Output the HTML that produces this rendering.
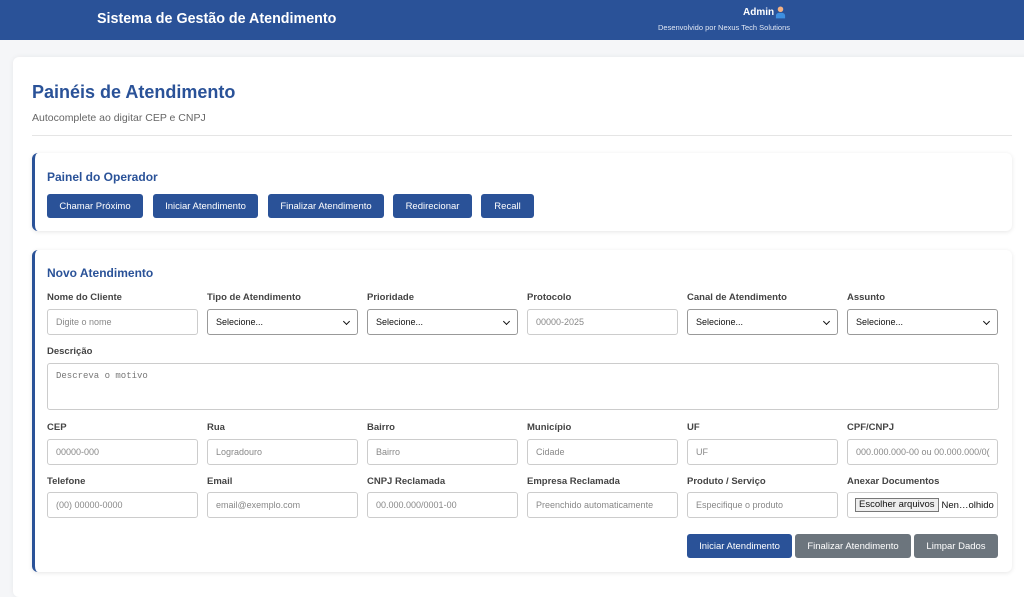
<!DOCTYPE html>
<html><head><meta charset="utf-8"><style>
*{box-sizing:border-box;margin:0;padding:0}
body{width:1024px;height:574px;overflow:hidden;background:#f5f6f8;font-family:"Liberation Sans",sans-serif;position:relative}
.hdr{position:absolute;left:0;top:0;width:1024px;height:40px;background:#2a5298}
.ttl{position:absolute;left:97px;top:11px;color:#fff;font:bold 14.3px "Liberation Sans",sans-serif}
.adm{position:absolute;left:743px;top:7px;color:#fff;font:bold 10px "Liberation Sans",sans-serif}
.dev{position:absolute;left:658px;top:23px;color:#dfe6f3;font:7.5px "Liberation Sans",sans-serif}
.card{position:absolute;left:13px;top:57px;width:1030px;height:540px;background:#fff;border-radius:6px;box-shadow:0 0 6px rgba(0,0,0,.06)}
h1{position:absolute;left:32px;top:82px;color:#2a5298;font:bold 18px "Liberation Sans",sans-serif}
.sub{position:absolute;left:32px;top:112px;color:#666;font:10.5px "Liberation Sans",sans-serif}
.hr{position:absolute;left:32px;top:135px;width:980px;height:1px;background:#e5e5e5}
.pn{position:absolute;left:32px;width:980px;background:#fff;border-left:3px solid #2a5298;border-radius:6px;box-shadow:0 1px 5px rgba(0,0,0,.1)}
.pt{position:absolute;color:#2a5298;font:bold 12px "Liberation Sans",sans-serif}
.b{position:absolute;height:24px;border-radius:3px;background:#2a5298;color:#fff;font:9.5px "Liberation Sans",sans-serif;display:flex;align-items:center;justify-content:center}
.g{background:#6c757d}
.l{position:absolute;color:#444;font:bold 9.5px "Liberation Sans",sans-serif}
.i{position:absolute;width:151px;height:26px;border:1px solid #ccc;border-radius:3px;background:#fff;color:#888;font:9px "Liberation Sans",sans-serif;padding-left:8px;display:flex;align-items:center;white-space:nowrap;overflow:hidden}
.s{color:#111;border-color:#999}
.s:after{content:"";position:absolute;right:8px;top:9px;width:4px;height:4px;border-right:1.5px solid #111;border-bottom:1.5px solid #111;transform:rotate(45deg)}
</style></head><body>
<div class="hdr"></div>
<div class="ttl">Sistema de Gestão de Atendimento</div>
<div class="adm">Admin</div>
<svg style="position:absolute;left:775px;top:5px" width="11" height="14" viewBox="0 0 12 14"><circle cx="6" cy="4" r="3" fill="#f4b183"/><path d="M1 14v-3a3 3 0 0 1 3-3h4a3 3 0 0 1 3 3v3z" fill="#3d8fe0"/></svg>
<div class="dev">Desenvolvido por Nexus Tech Solutions</div>
<div class="card"></div>
<h1>Painéis de Atendimento</h1>
<div class="sub">Autocomplete ao digitar CEP e CNPJ</div>
<div class="hr"></div>
<div class="pn" style="top:153px;height:78px"></div>
<div class="pt" style="left:47px;top:170px">Painel do Operador</div>
<div class="b" style="left:47px;top:194px;width:96px">Chamar Próximo</div>
<div class="b" style="left:153px;top:194px;width:105px">Iniciar Atendimento</div>
<div class="b" style="left:268px;top:194px;width:116px">Finalizar Atendimento</div>
<div class="b" style="left:393px;top:194px;width:79px">Redirecionar</div>
<div class="b" style="left:481px;top:194px;width:53px">Recall</div>
<div class="pn" style="top:250px;height:322px"></div>
<div class="pt" style="left:47px;top:266px">Novo Atendimento</div>
<div class="l" style="left:47px;top:292px">Nome do Cliente</div>
<div class="l" style="left:207px;top:292px">Tipo de Atendimento</div>
<div class="l" style="left:367px;top:292px">Prioridade</div>
<div class="l" style="left:527px;top:292px">Protocolo</div>
<div class="l" style="left:687px;top:292px">Canal de Atendimento</div>
<div class="l" style="left:847px;top:292px">Assunto</div>
<div class="i" style="left:47px;top:309px">Digite o nome</div>
<div class="i s" style="left:207px;top:309px">Selecione...</div>
<div class="i s" style="left:367px;top:309px">Selecione...</div>
<div class="i" style="left:527px;top:309px">00000-2025</div>
<div class="i s" style="left:687px;top:309px">Selecione...</div>
<div class="i s" style="left:847px;top:309px">Selecione...</div>
<div class="l" style="left:47px;top:346px">Descrição</div>
<div class="i" style="left:47px;top:363px;width:952px;height:47px;align-items:flex-start;padding-top:7px;font:9px 'Liberation Mono',monospace;color:#777">Descreva o motivo</div>
<div class="l" style="left:47px;top:422px">CEP</div>
<div class="l" style="left:207px;top:422px">Rua</div>
<div class="l" style="left:367px;top:422px">Bairro</div>
<div class="l" style="left:527px;top:422px">Município</div>
<div class="l" style="left:687px;top:422px">UF</div>
<div class="l" style="left:847px;top:422px">CPF/CNPJ</div>
<div class="i" style="left:47px;top:439px">00000-000</div>
<div class="i" style="left:207px;top:439px">Logradouro</div>
<div class="i" style="left:367px;top:439px">Bairro</div>
<div class="i" style="left:527px;top:439px">Cidade</div>
<div class="i" style="left:687px;top:439px">UF</div>
<div class="i" style="left:847px;top:439px">000.000.000-00 ou 00.000.000/0(</div>
<div class="l" style="left:47px;top:476px">Telefone</div>
<div class="l" style="left:207px;top:476px">Email</div>
<div class="l" style="left:367px;top:476px">CNPJ Reclamada</div>
<div class="l" style="left:527px;top:476px">Empresa Reclamada</div>
<div class="l" style="left:687px;top:476px">Produto / Serviço</div>
<div class="l" style="left:847px;top:476px">Anexar Documentos</div>
<div class="i" style="left:47px;top:492px">(00) 00000-0000</div>
<div class="i" style="left:207px;top:492px">email@exemplo.com</div>
<div class="i" style="left:367px;top:492px">00.000.000/0001-00</div>
<div class="i" style="left:527px;top:492px">Preenchido automaticamente</div>
<div class="i" style="left:687px;top:492px">Especifique o produto</div>
<div class="i" style="left:847px;top:492px;color:#111;font-size:9.5px;padding-left:7px"><span style="border:1px solid #777;background:#eee;padding:0 3px;margin-right:3px;line-height:12px">Escolher arquivos</span>Nen…olhido</div>
<div class="b" style="left:687px;top:534px;width:105px">Iniciar Atendimento</div>
<div class="b g" style="left:795px;top:534px;width:116px">Finalizar Atendimento</div>
<div class="b g" style="left:914px;top:534px;width:84px">Limpar Dados</div>
</body></html>
